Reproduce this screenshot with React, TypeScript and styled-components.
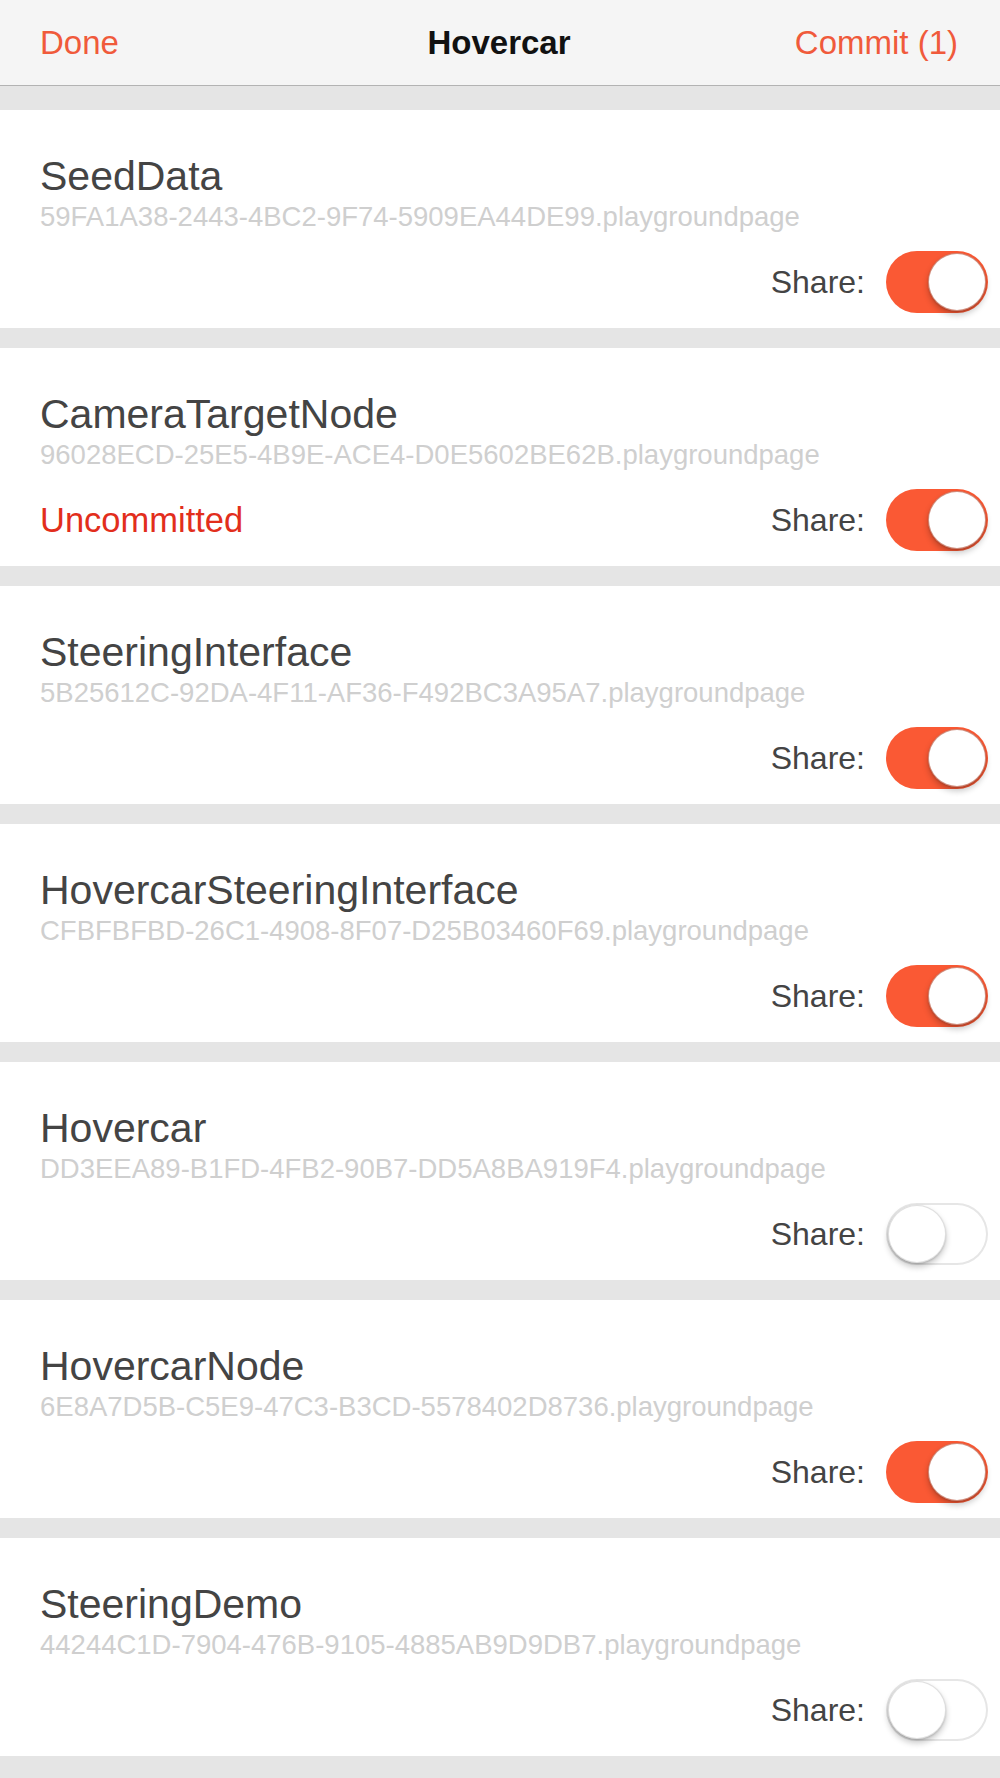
import React from "react";
import styled, { createGlobalStyle } from "styled-components";

const Global = createGlobalStyle`
  html, body { margin: 0; padding: 0; background: #e5e5e5; }
  body { font-family: "Liberation Sans", Arial, sans-serif; -webkit-font-smoothing: antialiased; }
  * { box-sizing: border-box; }
`;

const Page = styled.div`
  width: 1000px;
  min-height: 1778px;
  background: #e5e5e5;
`;

const NavBar = styled.header`
  height: 86px;
  background: #f5f5f5;
  border-bottom: 1px solid #b3b3b3;
  display: grid;
  grid-template-columns: 1fr auto 1fr;
  align-items: center;
  padding: 0 42px 0 40px;
`;

const NavButton = styled.span<{ $align: "left" | "right" }>`
  font-size: 33px;
  color: #f05a3b;
  text-align: ${(p) => p.$align};
  line-height: 37px;
`;

const NavTitle = styled.span`
  font-size: 33px;
  font-weight: 700;
  color: #111;
  line-height: 37px;
`;

const List = styled.main`
  display: flex;
  flex-direction: column;
  gap: 20px;
  padding: 24px 0 22px;
`;

const Card = styled.section`
  background: #fff;
  height: 218px;
  padding: 42px 12px 15px 40px;
  display: flex;
  flex-direction: column;
`;

const Title = styled.div`
  font-size: 41px;
  line-height: 48px;
  color: #444;
`;

const Subtitle = styled.div`
  font-size: 27.5px;
  line-height: 32px;
  color: #cfcfcf;
  margin-top: 1px;
`;

const Footer = styled.div`
  margin-top: 18px;
  height: 62px;
  display: flex;
  align-items: center;
  justify-content: space-between;
`;

const Status = styled.span`
  font-size: 34.5px;
  line-height: 62px;
  color: #e22e1c;
`;

const ShareGroup = styled.div`
  display: flex;
  align-items: center;
  gap: 21px;
  margin-left: auto;
`;

const ShareLabel = styled.span`
  font-size: 32px;
  line-height: 62px;
  color: #444;
`;

const Track = styled.div<{ $on: boolean }>`
  position: relative;
  width: 102px;
  height: 62px;
  border-radius: 31px;
  background: ${(p) => (p.$on ? "#fa5934" : "#fff")};
  box-shadow: ${(p) => (p.$on ? "none" : "inset 0 0 0 2px #e6e6e6")};
`;

const Knob = styled.div<{ $on: boolean }>`
  position: absolute;
  top: 2px;
  left: ${(p) => (p.$on ? "42px" : "2px")};
  width: 58px;
  height: 58px;
  border-radius: 50%;
  background: #fff;
  border: 1px solid ${(p) => (p.$on ? "rgba(170,50,20,0.55)" : "rgba(0,0,0,0.12)")};
  box-shadow: 0 4px 6px rgba(0, 0, 0, 0.22), 0 1px 2px rgba(0, 0, 0, 0.15);
`;

type PageItem = { name: string; id: string; on: boolean; uncommitted?: boolean };

const pages: PageItem[] = [
  { name: "SeedData", id: "59FA1A38-2443-4BC2-9F74-5909EA44DE99", on: true },
  { name: "CameraTargetNode", id: "96028ECD-25E5-4B9E-ACE4-D0E5602BE62B", on: true, uncommitted: true },
  { name: "SteeringInterface", id: "5B25612C-92DA-4F11-AF36-F492BC3A95A7", on: true },
  { name: "HovercarSteeringInterface", id: "CFBFBFBD-26C1-4908-8F07-D25B03460F69", on: true },
  { name: "Hovercar", id: "DD3EEA89-B1FD-4FB2-90B7-DD5A8BA919F4", on: false },
  { name: "HovercarNode", id: "6E8A7D5B-C5E9-47C3-B3CD-5578402D8736", on: true },
  { name: "SteeringDemo", id: "44244C1D-7904-476B-9105-4885AB9D9DB7", on: false },
];

const Toggle = ({ on }: { on: boolean }) => (
  <Track $on={on} role="switch" aria-checked={on}>
    <Knob $on={on} />
  </Track>
);

export default function App() {
  return (
    <Page>
      <Global />
      <NavBar>
        <NavButton $align="left">Done</NavButton>
        <NavTitle>Hovercar</NavTitle>
        <NavButton $align="right">Commit (1)</NavButton>
      </NavBar>
      <List>
        {pages.map((p) => (
          <Card key={p.id}>
            <Title>{p.name}</Title>
            <Subtitle>{p.id}.playgroundpage</Subtitle>
            <Footer>
              {p.uncommitted && <Status>Uncommitted</Status>}
              <ShareGroup>
                <ShareLabel>Share:</ShareLabel>
                <Toggle on={p.on} />
              </ShareGroup>
            </Footer>
          </Card>
        ))}
      </List>
    </Page>
  );
}
